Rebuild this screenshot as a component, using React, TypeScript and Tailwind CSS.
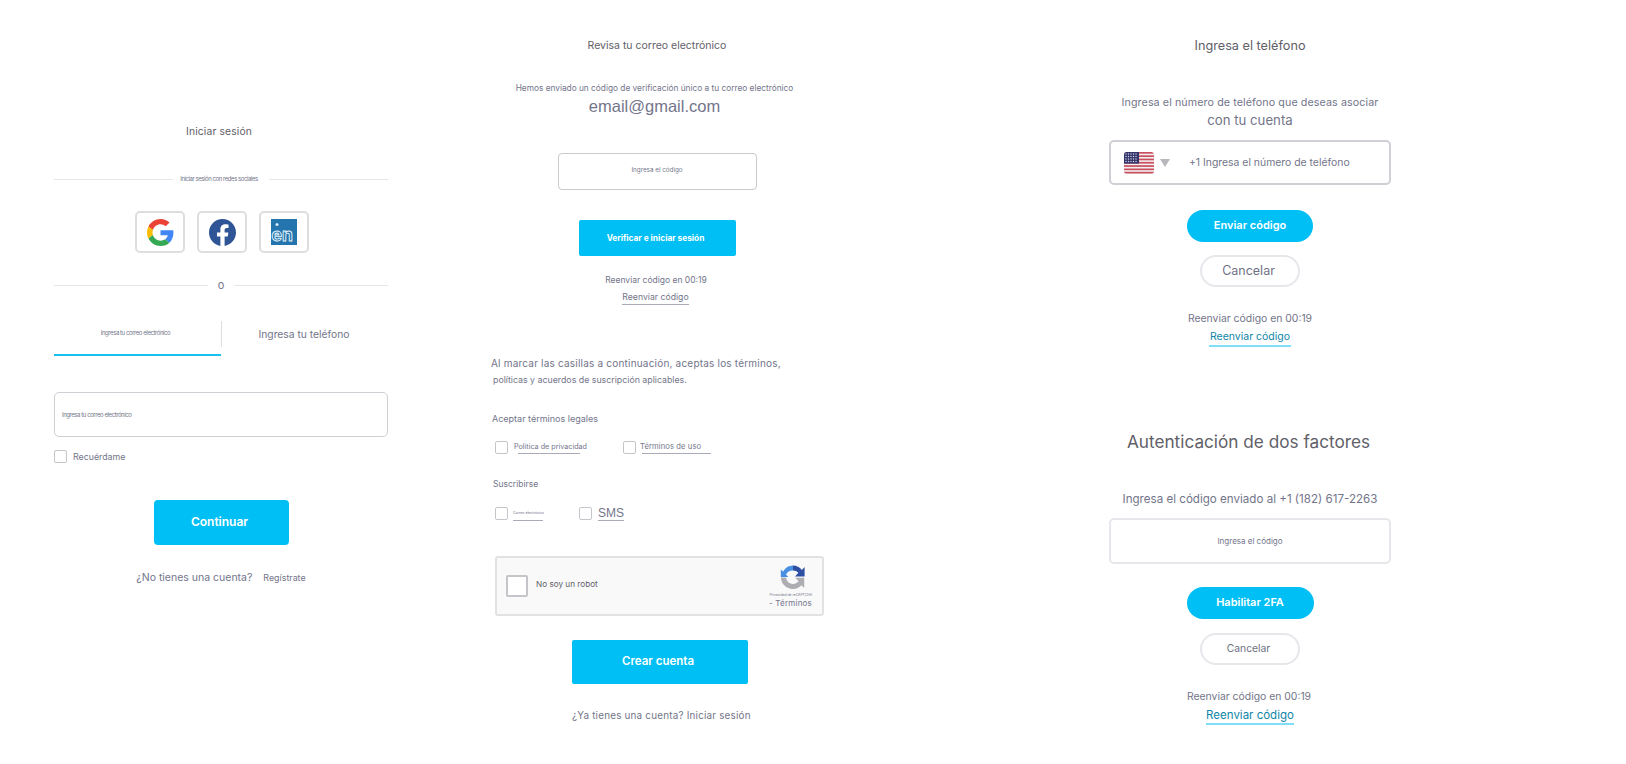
import type { ReactNode } from 'react'

function Check({ className = '' }: { className?: string }) {
  return <span className={`block h-[13px] w-[13px] shrink-0 rounded-[2px] border border-[#c4c5ca] bg-white ${className}`} />
}

function GoogleLogo() {
  return (
    <svg viewBox="0 0 48 48" className="h-[27px] w-[27px]">
      <path fill="#EA4335" d="M24 9.5c3.54 0 6.71 1.22 9.21 3.6l6.85-6.85C35.9 2.38 30.47 0 24 0 14.62 0 6.51 5.38 2.56 13.22l7.98 6.19C12.43 13.72 17.74 9.5 24 9.5z" />
      <path fill="#4285F4" d="M46.98 24.55c0-1.57-.15-3.09-.38-4.55H24v9.02h12.94c-.58 2.96-2.26 5.48-4.78 7.18l7.73 6c4.51-4.18 7.09-10.36 7.09-17.65z" />
      <path fill="#FBBC05" d="M10.53 28.59c-.48-1.45-.76-2.99-.76-4.59s.27-3.14.76-4.59l-7.98-6.19C.92 16.46 0 20.12 0 24c0 3.88.92 7.54 2.56 10.78l7.97-6.19z" />
      <path fill="#34A853" d="M24 48c6.48 0 11.93-2.13 15.89-5.81l-7.73-6c-2.15 1.45-4.92 2.3-8.16 2.3-6.26 0-11.57-4.22-13.47-9.91l-7.98 6.19C6.51 42.62 14.62 48 24 48z" />
    </svg>
  )
}

function FacebookLogo() {
  return (
    <svg viewBox="0 0 24 24" className="h-[27px] w-[27px]">
      <path fill="#2f5597" d="M24 12.07C24 5.4 18.63 0 12 0S0 5.4 0 12.07c0 6.03 4.39 11.02 10.13 11.93v-8.44H7.08v-3.49h3.05V9.41c0-3.02 1.79-4.69 4.53-4.69 1.31 0 2.68.24 2.68.24v2.97h-1.51c-1.49 0-1.96.93-1.96 1.89v2.25h3.33l-.53 3.49h-2.8V24C19.61 23.09 24 18.1 24 12.07z" />
    </svg>
  )
}

function EnLogo() {
  return (
    <svg viewBox="0 0 26 26" className="h-[26px] w-[26px]">
      <rect width="26" height="26" fill="#2475ad" />
      <circle cx="6" cy="5.500" r="1.6" fill="#cfe6f5" />
      <text x="0.5" y="21.500" fontSize="17.5" fontWeight="700" fontFamily="Inter, sans-serif" fill="#2475ad" stroke="#e4f2fb" strokeWidth="0.9">en</text>
    </svg>
  )
}

function UsFlag() {
  const stripes = [0, 1, 2, 3, 4, 5, 6]
  return (
    <svg viewBox="0 0 30 22" className="h-[22px] w-[30px] rounded-[3px]">
      <rect width="30" height="22" fill="#f4f0f0" />
      {stripes.map((s) => (
        <rect key={s} y={s * 3.3} width="30" height="1.7" fill="#c8505f" />
      ))}
      <rect width="15" height="11.6" fill="#33356a" />
      {[2, 4.5, 7, 9.5].map((y) =>
        [2, 4.5, 7, 9.5, 12].map((x) => <circle key={`${x}-${y}`} cx={x} cy={y} r="0.7" fill="#d8d8e8" />),
      )}
    </svg>
  )
}

function RecaptchaLogo() {
  return (
    <svg viewBox="0 0 26 25" className="h-[25px] w-[26px]">
      <path d="M13 1.5A11 11 0 0 0 3.2 7.6L0.8 5.4V13h7.6L6 10.6A7.6 7.6 0 0 1 13 6.6z" fill="#4a90e2" />
      <path d="M13 1.5c3.6 0 6.8 1.7 8.8 4.4L24.6 3v9.6H15l3.4-3.8A7.6 7.6 0 0 0 13 6.6z" fill="#2c4fa3" />
      <path d="M1 13.5h5.1c.4 4 3.3 6.4 6.9 6.4 2.2 0 4.2-1 5.6-2.6l-3.4-3.6h9V24l-2.7-2.8A12 12 0 0 1 13 25C6.400 25 1 19.800 1 13.500z" fill="#adadb2" />
    </svg>
  )
}

function SocialButton({ children }: { children: ReactNode }) {
  return (
    <button className="flex h-[42px] w-[50px] items-center justify-center rounded-[5px] border-2 border-[#dedee0] bg-white">
      {children}
    </button>
  )
}

function PillButton({ children, width }: { children: ReactNode; width: string }) {
  return (
    <button className={`mx-auto flex h-[32px] items-center justify-center rounded-full bg-[#00bff5] pb-px text-[11px] font-semibold text-white ${width}`}>
      {children}
    </button>
  )
}

function CancelButton({ textSize }: { textSize: string }) {
  return (
    <button className={`mx-auto flex h-[32px] w-[100px] items-center justify-center rounded-full border-2 border-[#e6e7eb] bg-white pr-[3px] text-[#6f7284] ${textSize}`}>
      Cancelar
    </button>
  )
}

function LoginColumn() {
  return (
    <section className="ml-[54px] flex w-[334px] shrink-0 flex-col pt-[123px] text-[#73758a]">
      <h2 className="pr-[4px] text-center text-[10.3px] leading-4 tracking-[0.15px] text-[#5f6068]">Iniciar sesión</h2>

      <div className="mt-[32px] flex h-4 items-center">
        <span className="h-px flex-1 bg-[#e6e6e8]" />
        <span className="w-[96px] pr-[4px] text-center text-[6px] leading-none tracking-[-0.44px]">Iniciar sesión con redes sociales</span>
        <span className="h-px flex-1 bg-[#e6e6e8]" />
      </div>

      <div className="mt-6 flex justify-center gap-3 pl-[2px]">
        <SocialButton><GoogleLogo /></SocialButton>
        <SocialButton><FacebookLogo /></SocialButton>
        <SocialButton><EnLogo /></SocialButton>
      </div>

      <div className="mt-6 flex h-4 items-center">
        <span className="h-px flex-1 bg-[#e6e6e8]" />
        <span className="w-[26px] text-center text-[11px] leading-none">o</span>
        <span className="h-px flex-1 bg-[#e6e6e8]" />
      </div>

      <div className="mt-[28px] flex h-[35px]">
        <div className="w-[167px] border-b-2 border-[#19c2ee] pr-1 pt-[8px] text-center text-[6px] leading-[8px] tracking-[-0.43px]">
          Ingresa tu correo electrónico
        </div>
        <div className="h-[26px] w-px bg-[#dedee0]" />
        <div className="flex-1 pr-[2px] pt-[5px] text-center text-[10.3px] leading-4">Ingresa tu teléfono</div>
      </div>

      <div className="mt-[36px] flex h-[45px] items-center rounded-[5px] border-[1.5px] border-[#cfcfd6] pl-[7px] text-[6px] tracking-[-0.43px]">
        Ingresa tu correo electrónico
      </div>

      <label className="mt-[13px] flex items-center gap-[6px]">
        <Check />
        <span className="text-[8.8px] leading-[13px]">Recuérdame</span>
      </label>

      <button className="mx-auto mt-[37px] h-[45px] w-[135px] rounded-[4px] bg-[#00bff5] pb-px pr-[3px] text-[12px] font-semibold text-white">
        Continuar
      </button>

      <div className="mt-[25px] flex h-4 items-center justify-center gap-[11px]">
        <span className="text-[10.5px]">¿No tienes una cuenta?</span>
        <span className="text-[8.9px]">Regístrate</span>
      </div>
    </section>
  )
}

function VerifyColumn() {
  return (
    <section className="ml-[102px] flex w-[334px] shrink-0 flex-col pt-[38px] text-[#73758a]">
      <h2 className="text-center text-[10.5px] leading-4 text-[#5f6068]">Revisa tu correo electrónico</h2>
      <p className="mt-[27px] pr-[5px] text-center text-[8.3px] leading-[14px]">
        Hemos enviado un código de verificación único a tu correo electrónico
      </p>
      <p className="mt-0 pr-[5px] text-center font-['Liberation_Sans',sans-serif] text-[16.5px] leading-[22px]">email@gmail.com</p>

      <div className="mx-auto mt-[36px] flex h-[37px] w-[199px] items-center justify-center rounded-[4px] border border-[#c9c9cf] pb-px text-[6.3px]">
        Ingresa el código
      </div>
      <button className="mx-auto mt-[30px] h-[36px] w-[157px] rounded-[2px] bg-[#00bff5] pr-[3px] text-[8.3px] font-bold text-white">
        Verificar e iniciar sesión
      </button>

      <p className="mt-[17px] pr-[2px] text-center text-[8.5px] leading-[14px]">Reenviar código en 00:19</p>
      <div className="mt-[4px] flex justify-center pr-[3px]">
        <span className="border-b border-[#a9abb6] text-[8.7px] leading-[13px]">Reenviar código</span>
      </div>

      <p className="ml-px mt-[50px] text-[10px] leading-4 tracking-[0.2px]">Al marcar las casillas a continuación, aceptas los términos,</p>
      <p className="ml-[3px] mt-[2px] text-[8.8px] leading-[14px]">políticas y acuerdos de suscripción aplicables.</p>

      <p className="ml-[2px] mt-[25px] text-[9px] leading-[14px]">Aceptar términos legales</p>
      <div className="ml-[5px] mt-[15px] flex">
        <Check />
        <div className="ml-[6px] w-[109px]">
          <span className="block text-[7.2px] leading-[11px]">Política de privacidad</span>
          <span className="ml-[4px] mt-[1px] block h-px w-[62px] bg-[#a9abb6]" />
        </div>
        <Check />
        <div className="ml-[4px]">
          <span className="block text-[7.6px] leading-[11px] tracking-[0.1px]">Términos de uso</span>
          <span className="ml-[2px] mt-[1px] block h-px w-[69px] bg-[#a9abb6]" />
        </div>
      </div>

      <p className="ml-[3px] mt-[23px] text-[8.5px] leading-[14px]">Suscribirse</p>
      <div className="ml-[5px] mt-[16px] flex">
        <Check />
        <div className="ml-[5px] w-[66px]">
          <span className="block text-[3.5px] leading-[13px]">Correo electrónico</span>
          <span className="block h-px w-[30px] bg-[#a9abb6]" />
        </div>
        <Check />
        <span className="ml-[6px] border-b border-[#a9abb6] font-['Liberation_Sans',sans-serif] text-[12px] leading-[13px]">SMS</span>
      </div>

      <div className="ml-[5px] mt-[35px] flex h-[60px] w-[329px] items-center rounded-[3px] border-2 border-[#e2e2e5] bg-[#f9f9f9] pl-[9px]">
        <span className="block h-[22px] w-[22px] rounded-[2px] border-2 border-[#c4c4c9] bg-white" />
        <span className="mb-[4px] ml-2 text-[8.2px] text-[#5f6068]">No soy un robot</span>
        <div className="ml-auto flex flex-col items-end pr-[10px]">
          <div className="mr-[6px]"><RecaptchaLogo /></div>
          <span className="mt-[3px] text-[3.4px] leading-[6px]">Privacidad de reCAPTCHA</span>
          <span className="text-[8px] leading-[10px] tracking-[0.2px]">- Términos</span>
        </div>
      </div>

      <button className="mx-auto mt-6 h-[44px] w-[176px] translate-x-[3px] rounded-[2px] bg-[#00bff5] pr-[4px] text-[11.5px] font-semibold text-white">
        Crear cuenta
      </button>
      <p className="ml-[82px] mt-6 text-[9.9px] leading-[14px] tracking-[0.2px]">¿Ya tienes una cuenta? Iniciar sesión</p>
    </section>
  )
}

function PhoneColumn() {
  return (
    <section className="ml-[285px] flex w-[282px] shrink-0 flex-col pt-[36px] text-[#73758a]">
      <h2 className="text-center text-[12.7px] leading-5 text-[#5f6068]">Ingresa el teléfono</h2>
      <p className="mt-[39px] text-center text-[10.7px] leading-4 tracking-[0.1px]">Ingresa el número de teléfono que deseas asociar</p>
      <p className="mt-0 text-center text-[13.2px] leading-[18px]">con tu cuenta</p>

      <div className="mt-[11px] flex h-[45px] items-center rounded-[5px] border-2 border-[#cfcfd6] pl-[13px]">
        <UsFlag />
        <span className="ml-[6px] h-0 w-0 border-x-[5px] border-t-[8px] border-x-transparent border-t-[#b8b8bc]" />
        <span className="ml-[19px] text-[10.4px]">+1 Ingresa el número de teléfono</span>
      </div>

      <div className="mt-[25px]"><PillButton width="w-[126px]">Enviar código</PillButton></div>
      <div className="mt-[13px]"><CancelButton textSize="text-[12.5px]" /></div>

      <p className="mt-[24px] text-center text-[10.4px] leading-4">Reenviar código en 00:19</p>
      <div className="mt-[2px] flex justify-center">
        <span className="border-b-2 border-[#7fdff8] px-px text-[10.5px] leading-4 text-[#0f86a8]">Reenviar código</span>
      </div>

      <h2 className="mt-[82px] pr-[3px] text-center text-[17.2px] leading-[26px] text-[#5f6068]">Autenticación de dos factores</h2>
      <p className="mt-[35px] text-center text-[11.6px] leading-[18px]">Ingresa el código enviado al +1 (182) 617-2263</p>

      <div className="mt-[10px] flex h-[46px] items-center justify-center rounded-[5px] border-2 border-[#e6e7eb] text-[8px]">
        Ingresa el código
      </div>

      <div className="mt-[23px]"><PillButton width="w-[127px]">Habilitar 2FA</PillButton></div>
      <div className="mt-[14px]"><CancelButton textSize="text-[10.3px]" /></div>

      <p className="mt-[24px] pr-[2px] text-center text-[10.4px] leading-4">Reenviar código en 00:19</p>
      <div className="mt-[2px] flex justify-center">
        <span className="border-b-2 border-[#7fdff8] text-[11.5px] leading-4 text-[#0f86a8]">Reenviar código</span>
      </div>
    </section>
  )
}

export default function App() {
  return (
    <div className="flex h-[764px] w-[1626px] overflow-hidden bg-white font-['Inter',sans-serif]">
      <LoginColumn />
      <VerifyColumn />
      <PhoneColumn />
    </div>
  )
}
